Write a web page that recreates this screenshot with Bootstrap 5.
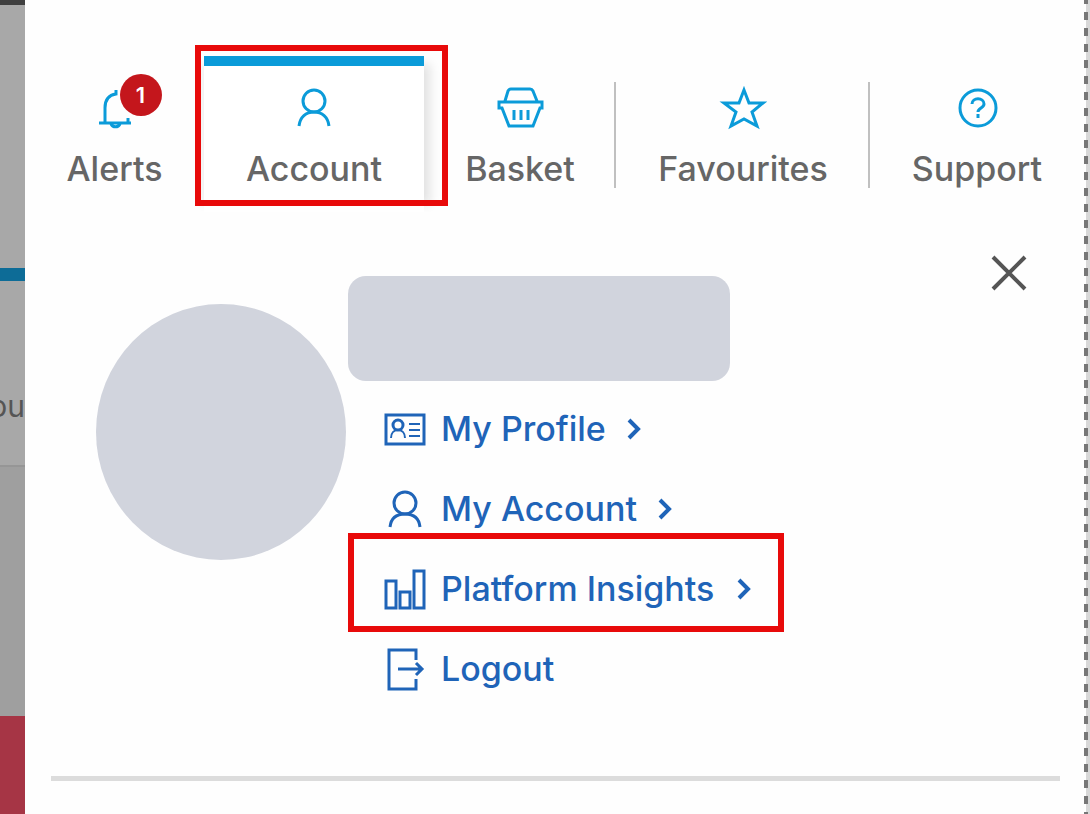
<!DOCTYPE html>
<html lang="en">
<head>
<meta charset="utf-8">
<meta name="viewport" content="width=device-width, initial-scale=1">
<title>Account menu</title>
<link href="https://cdn.jsdelivr.net/npm/bootstrap@5.3.0/dist/css/bootstrap.min.css" rel="stylesheet">
<style>
  :root { --sky: #0b9bd9; --link: #1f64b8; --ink: #666; --mark-red: #e80a0a; --blank: #d1d4dd; }
  body { font-family: Inter, "Liberation Sans", sans-serif; background: #fefefe; }
  svg { fill: none; stroke: currentColor; display: block; }

  /* dimmed page behind the panel */
  .behind { width: 25px; background: #a8a8a8; border-top: 5px solid #3f3f3f; color: #555; font-size: 30px; line-height: 40px; }
  .behind-head { height: 263px; }
  .behind-tab { height: 199px; border-top: 13px solid #0d6c97; border-bottom: 2px solid #969696; padding-top: 105px; }
  .behind-mid { height: 249px; background: #9f9f9f; }
  .behind-foot { background: #a63545; }

  /* right edge */
  .edge { width: 6px; background: linear-gradient(90deg, transparent 2px, #d8d8d8 2px); }
  .edge-dash { width: 4px; background: repeating-linear-gradient(#777 0 4px, transparent 4px 12px, #777 12px 16px); }

  .top-nav { display: grid; grid-template-columns: 179fr 220fr 192fr 254fr 214fr; padding-top: 56px; }
  .top-link { color: var(--ink); font-size: 34px; font-weight: 500; line-height: 40px; height: 156px; padding-top: 28px; gap: 17px; }
  .top-link svg { color: var(--sky); width: 48px; height: 48px; stroke-width: 3; }
  .top-link.active { background: #fff; border-top: 10px solid var(--sky); padding-top: 18px; }
  .tab-shade { box-shadow: 14px 0 10px -8px #e2e2e2, -10px 0 10px -8px #ececec; clip-path: inset(0 -24px); }
  .split::after { content: ""; position: absolute; right: 0; top: 26px; height: 106px; width: 2px; background: #c0c0c0; }
  .alert-count { top: 18px; left: calc(50% + 5px); width: 42px; height: 42px; background: #c4161c; font-size: 22px; font-weight: 600; line-height: 42px; }
  .callout { border: 6px solid var(--mark-red); pointer-events: none; }
  .callout-tab { inset: -11px -24px 6px -9px; }
  .callout-row { inset: -16px -33px -3px -36px; }

  .account-body { padding: 64px 53px 0 71px; gap: 2px; }
  .avatar-blank { width: 250px; height: 256px; margin-top: 28px; background: var(--blank); }
  .name-blank { width: 382px; height: 105px; border-radius: 18px; background: var(--blank); }
  .menu-list { margin-top: 8px; padding-left: 36px; }
  .menu-link { height: 80px; color: var(--link); font-size: 34px; font-weight: 500; line-height: 50px; gap: 15px; }
  .menu-link .glyph { width: 42px; height: 44px; stroke-width: 3; }
  .menu-link .chevron { width: 16px; height: 24px; stroke-width: 4; margin-left: 6px; }
  .close-btn { width: 44px; height: 44px; margin-top: -25px; color: #555; }
  .rule { height: 5px; margin: 67px 24px 0 26px; background: #dcdcdc; }
</style>
</head>
<body>
<div class="d-flex min-vh-100">
  <aside class="behind d-flex flex-column flex-shrink-0 overflow-hidden">
    <div class="behind-head flex-shrink-0"></div>
    <div class="behind-tab flex-shrink-0 d-flex justify-content-end"><span>ou</span></div>
    <div class="behind-mid flex-shrink-0"></div>
    <div class="behind-foot flex-grow-1"></div>
  </aside>

  <main class="flex-grow-1">
    <nav class="top-nav">
      <a href="#" class="top-link position-relative d-flex flex-column align-items-center text-decoration-none">
        <svg viewBox="0 0 48 48"><path d="M25 6v4C17 11 14 17 14 24V38M8 39h32M37 34v5M20 40a5 5 0 0 0 9 0"/></svg>
        <span>Alerts</span>
        <span class="alert-count position-absolute rounded-circle text-white text-center">1</span>
      </a>
      <div class="position-relative">
        <div class="tab-shade">
          <a href="#" class="top-link active d-flex flex-column align-items-center text-decoration-none">
            <svg viewBox="0 0 48 48"><circle cx="24" cy="17" r="11"/><path d="M9 42C10 33 16 28 24 28s14 5 15 14"/></svg>
            <span>Account</span>
          </a>
        </div>
        <div class="callout callout-tab position-absolute"></div>
      </div>
      <a href="#" class="top-link split position-relative d-flex flex-column align-items-center text-decoration-none">
        <svg viewBox="0 0 48 48"><path d="M9 17 12 7q1-2 3-2h19q2 0 3 2l4 10M3 18h43v6h-2l-7 18H13L6 24H3zM18 26v10M25 26v10M32 26v10"/></svg>
        <span>Basket</span>
      </a>
      <a href="#" class="top-link split position-relative d-flex flex-column align-items-center text-decoration-none">
        <svg viewBox="0 0 48 48"><path d="M25 6 30 19H44L33 28 38 42 25 35 12 42 17 28 5 19H20z"/></svg>
        <span>Favourites</span>
      </a>
      <a href="#" class="top-link d-flex flex-column align-items-center text-decoration-none">
        <svg viewBox="0 0 48 48"><circle cx="25" cy="24" r="18"/><path d="M19 20c0-7 12-7 12 0 0 4-6 4-6 8M25 30v4"/></svg>
        <span>Support</span>
      </a>
    </nav>

    <section class="account-body d-flex align-items-start">
      <div class="avatar-blank rounded-circle flex-shrink-0"></div>
      <div class="flex-grow-1">
        <div class="name-blank"></div>
        <ul class="menu-list list-unstyled mb-0">
          <li><a href="#" class="menu-link d-inline-flex align-items-center text-decoration-none">
            <svg class="glyph" viewBox="0 0 42 44"><path d="M2 8h38v29H2z"/><circle cx="14" cy="18" r="5"/><path d="M7 31c0-5 3-8 7-8s7 3 7 8M25 17h11M25 23h11M25 29h11" stroke-width="2"/></svg>
            <span>My Profile</span>
            <svg class="chevron" viewBox="0 0 16 24"><path d="M2 3l9 9-9 9"/></svg></a></li>
          <li><a href="#" class="menu-link d-inline-flex align-items-center text-decoration-none">
            <svg class="glyph" viewBox="0 0 42 44"><circle cx="21" cy="16" r="11"/><path d="M6 40C7 31 13 27 21 27s14 4 15 13"/></svg>
            <span>My Account</span>
            <svg class="chevron" viewBox="0 0 16 24"><path d="M2 3l9 9-9 9"/></svg></a></li>
          <li><a href="#" class="menu-link position-relative d-inline-flex align-items-center text-decoration-none">
            <svg class="glyph" viewBox="0 0 42 44"><path d="M2 14h10v27H2zM16 25h10v16H16zM30 4h10v37H30z"/></svg>
            <span>Platform Insights</span>
            <svg class="chevron" viewBox="0 0 16 24"><path d="M4 3l9 9-9 9"/></svg>
            <span class="callout callout-row position-absolute"></span></a></li>
          <li><a href="#" class="menu-link d-inline-flex align-items-center text-decoration-none">
            <svg class="glyph" viewBox="0 0 42 44"><path d="M32 13V3H5v39h27V32M14 22h24M32 16l6 6-6 6"/></svg>
            <span>Logout</span></a></li>
        </ul>
      </div>
      <button type="button" aria-label="Close" class="close-btn btn p-0 border-0 flex-shrink-0">
        <svg viewBox="0 0 44 44" stroke-width="4"><path d="M6 6 38 38M38 6 6 38"/></svg>
      </button>
    </section>
    <div class="rule"></div>
  </main>

  <div class="edge flex-shrink-0"><div class="edge-dash h-100"></div></div>
</div>
<script src="https://cdn.jsdelivr.net/npm/bootstrap@5.3.0/dist/js/bootstrap.bundle.min.js"></script>
</body>
</html>
